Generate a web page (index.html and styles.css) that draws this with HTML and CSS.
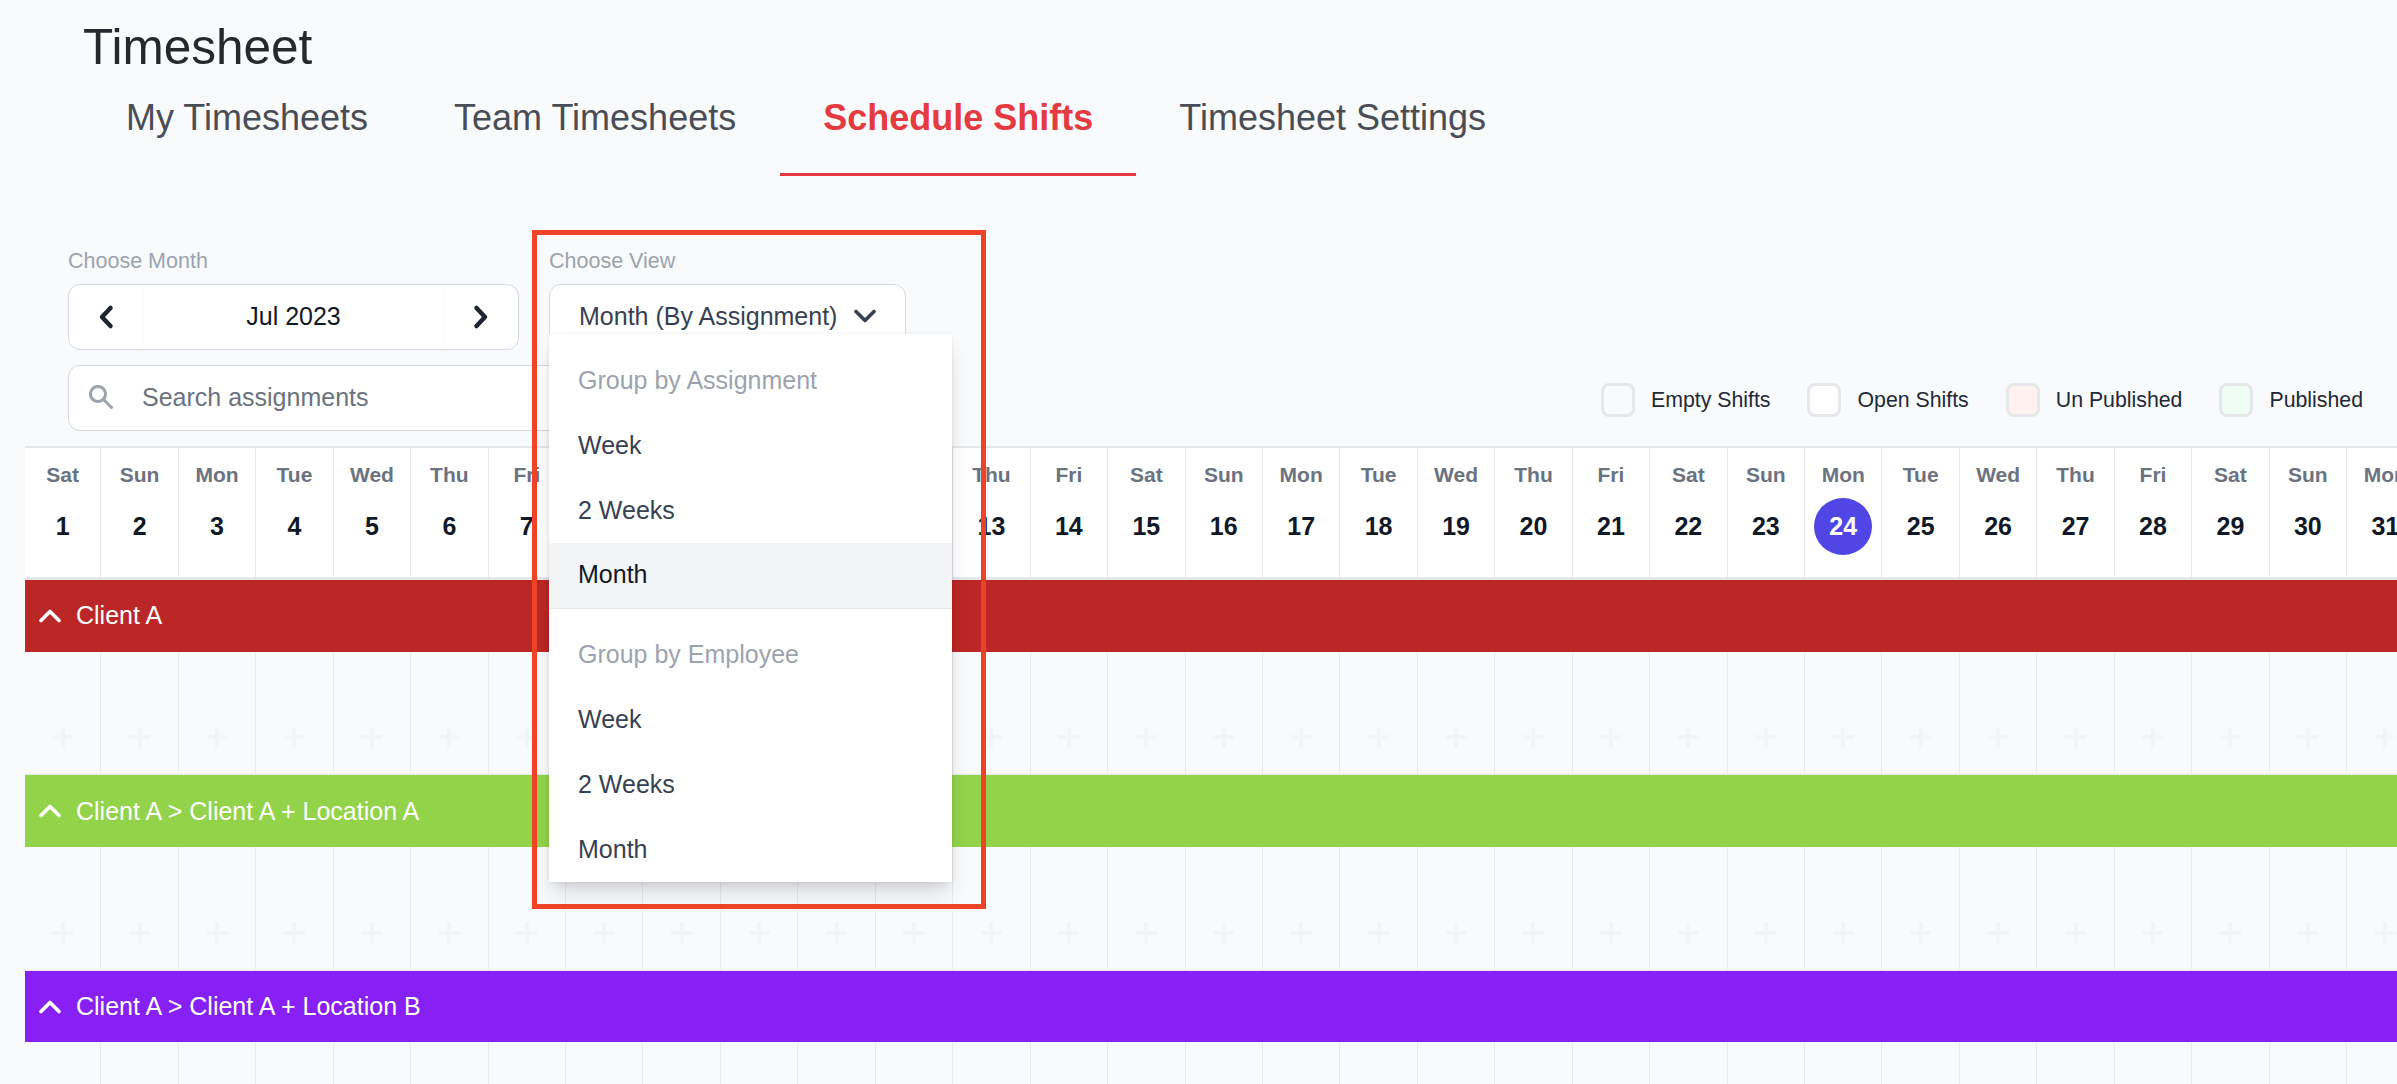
FILE: index.html
```html
<!DOCTYPE html>
<html lang="en">
<head>
    <meta charset="UTF-8">
    <meta name="viewport" content="width=device-width, initial-scale=1.0">
    <title>Timesheet</title>
    <link rel="stylesheet" href="styles.css">
</head>
<body>
    <h1 class="page-title">Timesheet</h1>

    <nav class="tabs">
        <a class="tab">My Timesheets</a>
        <a class="tab">Team Timesheets</a>
        <a class="tab active">Schedule Shifts</a>
        <a class="tab">Timesheet Settings</a>
    </nav>

    <div class="toolbar">
        <div class="filters">
            <div class="field">
                <div class="field-label">Choose Month</div>
                <div class="month-picker">
                    <div class="month-btn">
                        <svg width="18" height="26" viewBox="0 0 18 26" fill="none" stroke="#1f2530" stroke-width="4.5" stroke-linecap="round" stroke-linejoin="round"><path d="M13.5 4 5 13l8.500 9"/></svg>
                    </div>
                    <div class="month-value">Jul 2023</div>
                    <div class="month-btn next">
                        <svg width="18" height="26" viewBox="0 0 18 26" fill="none" stroke="#1f2530" stroke-width="4.5" stroke-linecap="round" stroke-linejoin="round"><path d="M4.500 4 13 13l-8.500 9"/></svg>
                    </div>
                </div>
            </div>

            <div class="field view-field">
                <div class="field-label">Choose View</div>
                <div class="view-select">
                    <span>Month (By Assignment)</span>
                    <svg width="22" height="14" viewBox="0 0 22 14" fill="none" stroke="#374151" stroke-width="3.600" stroke-linecap="round" stroke-linejoin="round"><path d="M2 2.500 11 11.500l9-9"/></svg>
                </div>

                <div class="view-menu">
                    <div class="menu-group">
                        <div class="menu-heading">Group by Assignment</div>
                        <div class="menu-item">Week</div>
                        <div class="menu-item">2 Weeks</div>
                        <div class="menu-item selected">Month</div>
                    </div>
                    <div class="menu-group last">
                        <div class="menu-heading">Group by Employee</div>
                        <div class="menu-item">Week</div>
                        <div class="menu-item">2 Weeks</div>
                        <div class="menu-item">Month</div>
                    </div>
                </div>
            </div>
        </div>

        <div class="search-row">
            <div class="search-box">
                <svg width="30" height="30" viewBox="0 0 20 20" fill="#9ca3af"><path fill-rule="evenodd" clip-rule="evenodd" d="M8 4a4 4 0 100 8 4 4 0 000-8zM2 8a6 6 0 1110.89 3.476l4.817 4.817a1 1 0 01-1.414 1.414l-4.816-4.816A6 6 0 012 8z"/></svg>
                <span>Search assignments</span>
            </div>

            <div class="legend">
                <div class="legend-item"><span class="swatch empty"></span>Empty Shifts</div>
                <div class="legend-item"><span class="swatch open"></span>Open Shifts</div>
                <div class="legend-item"><span class="swatch unpublished"></span>Un Published</div>
                <div class="legend-item"><span class="swatch published"></span>Published</div>
            </div>
        </div>
    </div>

    <div class="schedule">
        <div class="day-header" id="dayHeader"></div>

        <div class="client-bar red">
            <svg width="22" height="14" viewBox="0 0 22 14" fill="none" stroke="#fff" stroke-width="3.600" stroke-linecap="round" stroke-linejoin="round"><path d="M2 11.500 11 2.500l9 9"/></svg>
            <span>Client A</span>
        </div>
        <div class="shift-row"></div>

        <div class="client-bar green">
            <svg width="22" height="14" viewBox="0 0 22 14" fill="none" stroke="#fff" stroke-width="3.600" stroke-linecap="round" stroke-linejoin="round"><path d="M2 11.500 11 2.500l9 9"/></svg>
            <span>Client A &gt; Client A + Location A</span>
        </div>
        <div class="shift-row"></div>

        <div class="client-bar purple">
            <svg width="22" height="14" viewBox="0 0 22 14" fill="none" stroke="#fff" stroke-width="3.600" stroke-linecap="round" stroke-linejoin="round"><path d="M2 11.500 11 2.500l9 9"/></svg>
            <span>Client A &gt; Client A + Location B</span>
        </div>
        <div class="shift-row"></div>
    </div>

    <div class="highlight-frame"></div>

    <script src="app.js"></script>
</body>
</html>
```

FILE: styles.css
```css
* {
    box-sizing: border-box;
}

html, body {
    height: 1084px;
    overflow: hidden;
}

body {
    margin: 0;
    position: relative;
    background: #f9fafc;
    color: #111827;
    font-family: "Liberation Sans", Arial, sans-serif;
}

.page-title {
    margin: 0 0 0 83px;
    padding-top: 19px;
    height: 74px;
    font-size: 49.5px;
    line-height: 55px;
    font-weight: 400;
    color: #27282e;
}

.tabs {
    display: flex;
    margin-left: 83px;
}

.tab {
    padding: 24px 43px 35px;
    font-size: 36px;
    line-height: 40px;
    color: #4a4d55;
    border-bottom: 3px solid transparent;
}

.tab.active {
    color: #e53a40;
    font-weight: 700;
    border-bottom-color: #e53a40;
}

.tab.active {
    margin-left: 1px;
}

.toolbar {
    padding: 74px 34px 0 68px;
}

.filters {
    display: flex;
    gap: 30px;
}

.field-label {
    margin-bottom: 12px;
    font-size: 21.5px;
    line-height: 22px;
    color: #9ca3af;
}

.month-picker {
    display: flex;
    width: 451px;
    height: 66px;
    background: white;
    border: 1px solid #d5d8df;
    border-radius: 12px;
    font-size: 25px;
}

.month-btn {
    display: flex;
    align-items: center;
    justify-content: center;
    width: 75px;
    border-right: 1px solid #fafbfc;
}

.month-btn.next {
    border-right: none;
    border-left: 1px solid #fafbfc;
}

.month-value {
    flex: 1;
    display: flex;
    align-items: center;
    justify-content: center;
    padding-bottom: 2px;
}

.view-field {
    position: relative;
    z-index: 2;
}

.view-select {
    display: flex;
    align-items: center;
    justify-content: space-between;
    width: 357px;
    height: 66px;
    padding: 0 29px 2px 29px;
    background: white;
    border: 1px solid #d5d8df;
    border-radius: 12px;
    font-size: 25px;
    color: #374151;
}

.view-menu {
    position: absolute;
    top: 84px;
    left: 0;
    width: 403px;
    background: white;
    font-size: 25px;
    box-shadow: 0 15px 22px -4px rgba(0, 0, 0, 0.13), 0 6px 9px -3px rgba(0, 0, 0, 0.07), 0 0 3px rgba(0, 0, 0, 0.08);
}

.menu-group {
    padding-top: 14px;
    border-bottom: 1px solid #e5e7eb;
}

.menu-group.last {
    padding-top: 13px;
    border-bottom: none;
}

.menu-heading, .menu-item {
    display: flex;
    align-items: center;
    height: 65px;
    padding-left: 29px;
    color: #374151;
}

.menu-heading {
    color: #9ca3af;
}

.menu-item.selected {
    padding-bottom: 2px;
    background: #f3f4f6;
    color: #111827;
}

.search-row {
    display: flex;
    align-items: center;
    justify-content: space-between;
    margin-top: 15px;
}

.search-box {
    display: flex;
    align-items: center;
    gap: 26px;
    width: 560px;
    height: 66px;
    padding: 0 0 2px 17px;
    background: white;
    border: 1px solid #d5d8df;
    border-radius: 12px;
    font-size: 25px;
    color: #6b7280;
}

.legend {
    display: flex;
    gap: 37px;
    margin-top: 4px;
    font-size: 21.3px;
    color: #1f2937;
}

.legend-item {
    display: flex;
    align-items: center;
    gap: 16px;
}

.swatch {
    width: 34px;
    height: 34px;
    border: 3px solid #e5e7eb;
    border-radius: 8px;
}

.swatch.empty { background: #f9fafb; }
.swatch.open { background: #ffffff; }
.swatch.unpublished { background: #fdf2f0; }
.swatch.published { background: #f0fdf4; }

.schedule {
    margin: 15px 0 0 25px;
}

.day-header, .shift-row {
    display: grid;
    grid-template-columns: 76.4px repeat(30, 77.45px);
}

.day-header {
    background: white;
    border-top: 2px solid #e5e7eb;
    border-bottom: 3px solid #e5e7eb;
}

.day-cell {
    height: 129px;
    padding-top: 15px;
    border-right: 1px solid #e5e7eb;
    text-align: center;
}

.day-name {
    height: 35px;
    font-size: 21px;
    line-height: 24px;
    font-weight: 700;
    color: #6b7280;
}

.day-date {
    display: flex;
    align-items: center;
    justify-content: center;
    width: 58px;
    height: 57px;
    margin: 0 auto;
    border-radius: 50%;
    font-size: 25px;
    font-weight: 700;
}

.day-date.today {
    background: #4f46e5;
    color: white;
}

.client-bar {
    display: flex;
    align-items: center;
    gap: 15px;
    height: 71.7px;
    padding-left: 14px;
    font-size: 25px;
    color: white;
}

.client-bar.red { background: #bb2727; }
.client-bar.green { background: #93d34a; }
.client-bar.purple { background: #8720f5; }

.shift-cell {
    height: 123.7px;
    padding-top: 75px;
    border-right: 1px solid #e8eaee;
    border-bottom: 1px solid #e8eaee;
}

.add-shift {
    display: block;
    width: 21px;
    height: 21px;
    margin: 0 auto;
    background:
        linear-gradient(#f3f4f7, #f3f4f7) center / 100% 4px no-repeat,
        linear-gradient(#f3f4f7, #f3f4f7) center / 4px 100% no-repeat;
}

/* red annotation box drawn over the screenshot */
.highlight-frame {
    position: absolute;
    top: 230px;
    left: 532px;
    width: 454px;
    height: 679px;
    z-index: 3;
    border: 5px solid #ee4326;
    pointer-events: none;
}
```

FILE: app.js
```js
// build the July 2023 columns
const dayNames = ['Sat', 'Sun', 'Mon', 'Tue', 'Wed', 'Thu', 'Fri'];
const today = 24;

let headerHtml = '';
let rowHtml = '';
for (let day = 1; day <= 31; day++) {
    const todayClass = day === today ? ' today' : '';
    headerHtml += '<div class="day-cell"><div class="day-name">' + dayNames[(day - 1) % 7] + '</div>'
        + '<div class="day-date' + todayClass + '">' + day + '</div></div>';
    rowHtml += '<div class="shift-cell"><span class="add-shift"></span></div>';
}

document.getElementById('dayHeader').innerHTML = headerHtml;
document.querySelectorAll('.shift-row').forEach(row => {
    row.innerHTML = rowHtml;
});
```
